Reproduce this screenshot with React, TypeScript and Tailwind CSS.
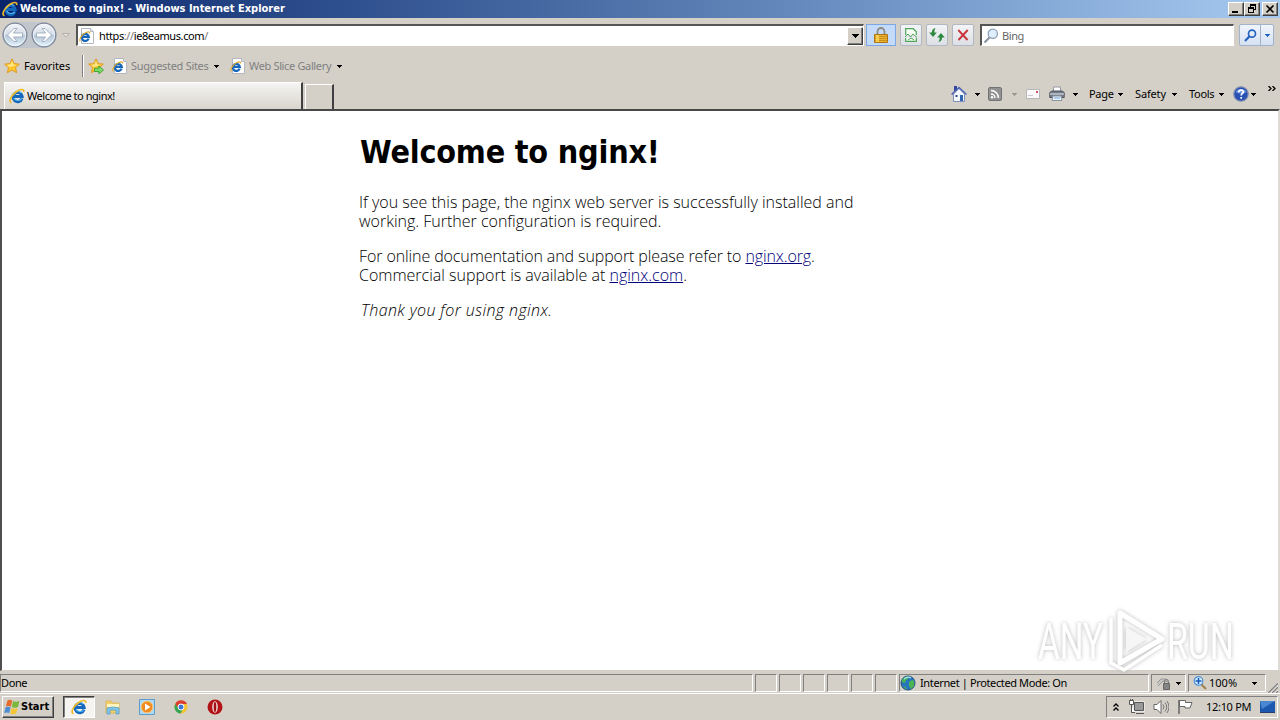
import type { ReactNode } from "react";

const IeIcon = ({ className = "" }: { className?: string }) => (
  <svg viewBox="0 0 16 16" className={`shrink-0 ${className}`}>
    <path d="M13 10.500A4.600 4.600 0 1 1 13.200 8.600H5" fill="none" stroke="#1668bd" strokeWidth="3" />
    <path d="M12.200 4.800A5 5 0 0 0 4 7.500M12.500 10.800A4.600 4.600 0 0 1 4.800 10" fill="none" stroke="#58bdf2" strokeWidth="1.100" />
    <path d="M2.400 14.800C-.6 13.500 2 7.600 7 4 10.600 1.200 15.600 .2 14.600 4" fill="none" stroke="#f0b929" strokeWidth="1.700" />
  </svg>
);

const PageIcon = ({ className = "" }: { className?: string }) => (
  <svg viewBox="0 0 16 16" className={`h-4 w-4 shrink-0 ${className}`}>
    <path d="M2.500 .5h9l3 3v12h-12z" fill="#fff" stroke="#b4b8be" />
    <path d="M11.500 .5v3h3" fill="#e4e8ee" stroke="#b4b8be" />
    <path d="M9.600 10.700A3.500 3.500 0 1 1 9.800 8.900H3.500" fill="none" stroke="#1767bb" strokeWidth="2.300" />
    <path d="M1.200 13.300C-.3 11.500 3 6.500 6.500 4.800 9 3.500 11 3.500 10.500 5.500" fill="none" stroke="#e4ab2b" strokeWidth="1.200" />
  </svg>
);

const Caret = ({ className = "text-black" }: { className?: string }) => (
  <svg viewBox="0 0 5 3" className={`h-[3px] w-[5px] shrink-0 ${className}`} shapeRendering="crispEdges">
    <path d="M0 0h5L2.500 3z" fill="currentColor" />
  </svg>
);

const StarIcon = ({ add = false }: { add?: boolean }) => (
  <svg viewBox="0 0 16 16" className="h-4 w-4 shrink-0">
    <path
      d="M8 .8l2.200 4.800 5.200.5-3.900 3.500 1.200 5.200L8 12.100l-4.700 2.700 1.200-5.200L.6 6.100l5.200-.5z"
      fill="#ffc62b"
      stroke="#dd9624"
      strokeWidth=".9"
    />
    <path d="M8 3l1.400 3.500 3 .4-6.800 2L3 7l3.500-.5z" fill="#ffe98c" />
    {add && <path d="M6.500 10.200h4.300V8l4.700 4-4.700 3.800v-2.300H6.500z" fill="#7bdc68" stroke="#2c9a2f" strokeWidth=".8" />}
  </svg>
);

const NavButton = ({ flip = false }: { flip?: boolean }) => (
  <svg viewBox="0 0 26 26" className={`h-[26px] w-[26px] shrink-0 ${flip ? "-scale-x-100" : ""}`}>
    <defs>
      <linearGradient id="nav" x1="0" y1="0" x2="0" y2="1">
        <stop offset="0" stopColor="#f5f7fa" />
        <stop offset=".48" stopColor="#d3dce7" />
        <stop offset=".52" stopColor="#b4c5d6" />
        <stop offset="1" stopColor="#e5f5fd" />
      </linearGradient>
    </defs>
    <circle cx="13" cy="13" r="11.800" fill="url(#nav)" stroke="#7d8999" strokeWidth="1.300" />
    <circle cx="13" cy="13" r="10.600" fill="none" stroke="#f4f8fc" strokeWidth=".8" />
    <path d="M5.500 13l6.500-6.500h3L11.400 11H20.500v4h-9.100L15 19.500h-3z" fill="#fff" stroke="#9baabc" strokeWidth=".9" />
  </svg>
);

const ToolButton = ({ children, className = "" }: { children: ReactNode; className?: string }) => (
  <div className={`flex h-[22px] w-[22px] items-center justify-center rounded-[2px] border border-[#b1b8c3] bg-linear-to-b from-[#f3f4f6] to-[#dcdfe5] ${className}`}>
    {children}
  </div>
);

const CaptionButton = ({ children }: { children: ReactNode }) => (
  <div className="flex h-[14px] w-4 items-center justify-center border border-t-white border-r-[#404040] border-b-[#404040] border-l-white bg-[#d4d0c8] shadow-[inset_-1px_-1px_0_#808080]">
    {children}
  </div>
);

const TitleBar = () => (
  <div className="flex h-[18px] items-center bg-linear-to-r from-[#0a246a] to-[#a6caf0] pr-[2px] pl-[2px]">
    <IeIcon className="h-4 w-4" />
    <span className="mt-px ml-[2px] flex-1 font-['DejaVu_Sans_Condensed','DejaVu_Sans',sans-serif] text-[11px] font-bold text-white">
      Welcome to nginx! - Windows Internet Explorer
    </span>
    <CaptionButton>
      <svg viewBox="0 0 10 10" className="h-[10px] w-[10px]" shapeRendering="crispEdges">
        <path d="M1 7h6v2H1z" />
      </svg>
    </CaptionButton>
    <CaptionButton>
      <svg viewBox="0 0 10 10" className="h-[10px] w-[10px]" shapeRendering="crispEdges">
        <path d="M3 0h6v6H7V5h1V2H4v1H3zM1 3h6v6H1zM2 5v3h4V5z" fillRule="evenodd" />
      </svg>
    </CaptionButton>
    <div className="w-[2px]" />
    <CaptionButton>
      <svg viewBox="0 0 10 10" className="h-[10px] w-[10px]">
        <path d="M1.500 1.500l7 7M8.500 1.500l-7 7" stroke="#000" strokeWidth="1.600" />
      </svg>
    </CaptionButton>
  </div>
);

const AddressRow = () => (
  <div className="flex h-[34px] items-center pl-[2px]">
    <div className="flex h-[26px] w-[55px] items-center justify-between rounded-full bg-[#c1c5cc]">
      <NavButton />
      <NavButton flip />
    </div>
    <svg viewBox="0 0 8 5" className="ml-[5px] h-[5px] w-2">
      <path d="M.5.5h7L4 4.200z" fill="#e4e1dc" stroke="#aaa69f" strokeWidth=".8" />
    </svg>
    <div className="ml-[6px] flex h-[22px] w-[788px] items-center border-t-2 border-r border-b border-l-2 border-t-[#555] border-r-white border-b-white border-l-[#555] bg-white">
      <PageIcon className="ml-px" />
      <span className="mt-px ml-1 flex-1 text-[11px] tracking-[-0.4px]">
        https<span className="text-[#777]">://</span>ie8eamus.com<span className="text-[#777]">/</span>
      </span>
      <div className="flex h-[18px] w-4 items-center justify-center border border-t-white border-r-[#404040] border-b-[#404040] border-l-white bg-[#d4d0c8] shadow-[inset_-1px_-1px_0_#808080]">
        <svg viewBox="0 0 7 4" className="h-1 w-[7px]" shapeRendering="crispEdges">
          <path d="M0 0h7L3.500 4z" />
        </svg>
      </div>
    </div>
    <div className="ml-[2px] flex h-[22px] w-[30px] items-center justify-center border border-[#7ba7e8] bg-[#c3daf9]">
      <svg viewBox="0 0 14 16" className="-ml-px h-4 w-[14px]">
        <path d="M3.500 8V4.500a3.500 3.500 0 0 1 7 0V8" fill="none" stroke="#8e8a80" strokeWidth="1.800" />
        <path d="M.5 7.500h13v8H.5z" fill="#eeb32c" stroke="#ad7413" />
        <path d="M1 9.500h12M1 11.500h12M1 13.500h12" stroke="#bf851c" strokeWidth=".8" />
        <path d="M2 8h3v7H2z" fill="#ffe064" opacity=".7" />
      </svg>
    </div>
    <ToolButton className="ml-1">
      <svg viewBox="0 0 12 14" className="h-[14px] w-3">
        <path d="M.7 7V.7h7.500l3.100 3V7M.7 10v3.300h10.600V10" fill="#f7fff5" stroke="#4ea45a" strokeWidth="1.200" />
        <path d="M0 9l3-3 2.500 3L8 6l4 3.500M3 12l3-2 3 2" fill="none" stroke="#4ea45a" />
      </svg>
    </ToolButton>
    <ToolButton className="ml-1">
      <svg viewBox="0 0 16 14" className="h-[14px] w-4" fill="#2c8a40">
        <path d="M6.500 0Q3 .8 2.800 4.500H.2L4 9l3.800-4.500H5.300Q5.200 2 6.500 0z" />
        <path d="M9.500 14q3.500-.8 3.700-4.500h2.600L12 5 8.200 9.500h2.500q.1 2.500-1.200 4.500z" />
      </svg>
    </ToolButton>
    <ToolButton className="ml-1">
      <svg viewBox="0 0 12 12" className="h-3 w-3">
        <path d="M1.300 1l9.200 10M10.700 1L1.500 11" stroke="#c9363d" strokeWidth="1.900" />
      </svg>
    </ToolButton>
    <div className="ml-[6px] flex h-[22px] w-[254px] items-center border-t-2 border-r border-b border-l-2 border-t-[#555] border-r-white border-b-white border-l-[#555] bg-white">
      <svg viewBox="0 0 16 16" className="ml-[1px] h-4 w-4">
        <path d="M6.500 9.500L1.500 14.500" stroke="#8c939e" strokeWidth="2.200" />
        <circle cx="9.800" cy="5.800" r="4.600" fill="#e0effb" stroke="#8ca0ba" strokeWidth="1.300" />
      </svg>
      <span className="mt-px ml-[3px] text-[11px] tracking-[-0.4px] text-[#666]">Bing</span>
    </div>
    <div className="ml-[5px] flex h-[22px] w-[35px] rounded-[2px] border border-[#a2b2ca] bg-linear-to-b from-[#f0f5fb] to-[#d5e1f2]">
      <div className="flex w-[21px] items-center justify-center border-r border-[#a2b2ca]">
        <svg viewBox="0 0 13 13" className="h-[13px] w-[13px]" fill="none" stroke="#2463bf">
          <circle cx="8" cy="4.700" r="3.500" strokeWidth="1.700" />
          <path d="M5.300 7.600L1 12" strokeWidth="2.200" />
        </svg>
      </div>
      <div className="flex flex-1 items-center justify-center">
        <Caret className="text-[#2463bf]" />
      </div>
    </div>
  </div>
);

const FavoritesRow = () => (
  <div className="flex h-7 items-center pl-1 text-[11px]">
    <StarIcon />
    <span className="ml-1 w-[58px] tracking-[-0.1px]">Favorites</span>
    <div className="h-[22px] w-[2px] border-r border-l border-r-white border-l-[#808080]" />
    <div className="ml-1 flex">
      <StarIcon add />
    </div>
    <PageIcon className="ml-2" />
    <span className="mt-px ml-[3px] w-[83px] tracking-[-0.3px] text-[#808080]">Suggested Sites</span>
    <Caret />
    <PageIcon className="ml-[11px]" />
    <span className="mt-px ml-[3px] w-[88px] tracking-[-0.35px] text-[#808080]">Web Slice Gallery</span>
    <Caret />
  </div>
);

const CommandBar = () => (
  <div className="flex h-[28px] w-[329px] items-center text-[11px]">
    <svg viewBox="0 0 16 16" className="h-4 w-4">
      <path d="M3 0h3v5H3z" fill="#36479e" />
      <path d="M2.500 8v7.500h11V8L8 2.500z" fill="#f4f7fc" stroke="#8090bb" />
      <path d="M.6 8.500L8 1.500l7.400 7" fill="none" stroke="#4d63b4" strokeWidth="1.600" />
      <path d="M9 9h3v6H9z" fill="#2f65b1" />
      <path d="M4.500 9h2v2h-2z" fill="#38488f" />
    </svg>
    <Caret className="ml-2 text-black" />
    <svg viewBox="0 0 14 14" className="ml-2 h-[14px] w-[14px]">
      <rect x=".5" y=".5" width="13" height="13" rx="1.500" fill="#929292" stroke="#747474" />
      <path d="M3 7a4 4 0 0 1 4 4M3 3.500A7.500 7.500 0 0 1 10.500 11" fill="none" stroke="#fff" strokeWidth="1.500" />
      <circle cx="4" cy="10.200" r="1.200" fill="#fff" />
    </svg>
    <Caret className="ml-[10px] text-[#9b9790]" />
    <svg viewBox="0 0 14 10" className="ml-[9px] h-[10px] w-[14px]">
      <path d="M.5.5h13v9H.5z" fill="#fafafa" stroke="#b5b7bd" />
      <path d="M10 2h2v2h-2z" fill="#cf5260" />
      <path d="M2 6.500h5" stroke="#c8cad0" />
    </svg>
    <svg viewBox="0 0 16 16" className="ml-[9px] h-4 w-4">
      <path d="M4.500 1h7v5h-7z" fill="#fff" stroke="#9498a2" />
      <path d="M.8 6.500L3 5h10l2.200 1.500v5H.8z" fill="#767d89" stroke="#4d535e" />
      <path d="M1 8h14" stroke="#c1c8d1" strokeWidth="1.500" />
      <path d="M4 10h8l1 4.500H3z" fill="#eef5fd" stroke="#8b94a2" />
      <path d="M5 12h6" stroke="#65a1da" />
    </svg>
    <Caret className="ml-2 text-black" />
    <span className="ml-[11px] w-[29px] tracking-[-0.3px]">Page</span>
    <Caret />
    <span className="ml-3 w-[37px] tracking-[-0.15px]">Safety</span>
    <Caret />
    <span className="ml-3 w-[30px] tracking-[-0.3px]">Tools</span>
    <Caret />
    <svg viewBox="0 0 16 16" className="ml-[9px] h-4 w-4">
      <circle cx="8" cy="8" r="7.200" fill="#2950b4" stroke="#7d8bad" strokeWidth="1.200" />
      <path d="M2.500 6a6 5 0 0 1 11 0q-5.500 3-11 0" fill="#7296df" />
      <path d="M5.800 6.200c0-3 4.500-2.700 4.500-.3C10.300 7.500 8.200 7.500 8.200 9.500M8.200 11v1.700" fill="none" stroke="#fff" strokeWidth="1.700" />
    </svg>
    <Caret className="ml-[2px] text-black" />
    <svg viewBox="0 0 8 5" className="mb-3 ml-3 h-[5px] w-2 shrink-0" fill="none" stroke="#000" strokeWidth="1.300">
      <path d="M.5 0L3 2.500.5 5M4.500 0L7 2.500 4.500 5" />
    </svg>
  </div>
);

const TabRow = () => (
  <div className="flex h-[29px] items-start justify-between pl-1">
    <div className="flex items-end">
      <div className="mt-[2px] flex h-[27px] w-[299px] items-center border-t border-r-2 border-l border-t-white border-r-[#404040] border-l-white bg-linear-to-b from-[#f5f4f2] to-[#d9d5ce] pl-1">
        <IeIcon className="h-4 w-4" />
        <span className="ml-[2px] text-[11px] tracking-[-0.47px]">Welcome to nginx!</span>
      </div>
      <div className="ml-[2px] h-[25px] w-[29px] border-t border-r-2 border-l border-t-white border-r-[#404040] border-l-white" />
    </div>
    <CommandBar />
  </div>
);

const Watermark = () => (
  <svg viewBox="0 0 200 64" className="absolute right-[40px] -bottom-[3px] h-16 w-[200px] overflow-visible opacity-80 drop-shadow-[0_0_2px_#aaa]">
    <g fill="#fff" className="font-['Roboto',sans-serif] text-[50px]">
      <text x="0" y="50" textLength="65" lengthAdjust="spacingAndGlyphs">ANY</text>
      <text x="129" y="50" textLength="67" lengthAdjust="spacingAndGlyphs">RUN</text>
    </g>
    <path d="M82 4v50l42-24z" fill="none" stroke="#fff" strokeWidth="5" strokeLinejoin="round" />
    <path d="M73 9v45l13 7 38-25" fill="none" stroke="#fff" strokeWidth="3.500" />
    <path d="M88 18v25l21-13z" fill="#f5f5f5" />
  </svg>
);

const PageView = () => (
  <div className="relative h-[562px] border-t-2 border-r-2 border-b border-l-2 border-t-[#484848] border-r-[#dedbd5] border-b-[#d4d0c8] border-l-[#505050] bg-white">
    <div className="ml-[357px] w-[560px] pt-[22px] font-['Open_Sans','Noto_Sans',sans-serif] text-base leading-[19px] font-light whitespace-nowrap">
      <h1 className="mb-[21px] pl-px font-['DejaVu_Sans_Condensed','DejaVu_Sans',sans-serif] text-[32px] leading-[39px] font-bold tracking-[-0.2px]">
        Welcome to nginx!
      </h1>
      <p className="mb-4">
        If you see this page, the nginx web server is successfully installed and
        <br />
        working. Further configuration is required.
      </p>
      <p className="mb-4">
        <span className="tracking-[-0.1px]">
          For online documentation and support please refer to <a className="text-[#00007b] underline">nginx.org</a>.
        </span>
        <br />
        Commercial support is available at <a className="text-[#00007b] underline">nginx.com</a>.
      </p>
      <p className="pl-[2px] tracking-[0.4px] italic">Thank you for using nginx.</p>
    </div>
    <Watermark />
  </div>
);

const cell = "flex h-[18px] items-center border border-t-[#808080] border-r-white border-b-white border-l-[#808080]";

const StatusBar = () => (
  <div className="flex h-[23px] gap-[2px] border-b border-white pt-[3px] text-[11px]">
    <div className={`${cell} w-[753px] tracking-[-0.4px]`}>Done</div>
    {[0, 1, 2, 3, 4, 5].map((i) => (
      <div key={i} className={`${cell} w-[22px]`} />
    ))}
    <div className={`${cell} w-[250px]`}>
      <svg viewBox="0 0 16 16" className="h-4 w-4">
        <circle cx="8" cy="8" r="7" fill="#2776bd" stroke="#285480" />
        <path d="M2 5q4-5 7-3-1 3-3 3l-1 3-3-1M9 7q3-3 5-1v5l-3 3-2-3M3 11l3 1 1 3" fill="#48b653" />
        <path d="M4 4q4-3 7-1" fill="none" stroke="#a8e6f5" strokeWidth="1.200" />
      </svg>
      <span className="ml-1 tracking-[-0.37px]">Internet | Protected Mode: On</span>
    </div>
    <div className={`${cell} w-[35px] pl-1`}>
      <svg viewBox="0 0 16 16" className="h-4 w-4">
        <path d="M1 8l4-4h5l2 3-5-1-5 5" fill="#c4c4c4" stroke="#9b9b9b" />
        <path d="M7.500 8.500h6v6h-6z" fill="#858585" stroke="#666" />
        <path d="M8.500 8V6.500a2 2 0 0 1 4 0V8" fill="none" stroke="#777" />
      </svg>
      <Caret className="ml-1 text-black" />
    </div>
    <div className={`${cell} w-[78px] pl-1`}>
      <svg viewBox="0 0 14 14" className="h-[14px] w-[14px]">
        <path d="M8 8l5 5" stroke="#a38250" strokeWidth="2.200" />
        <circle cx="5.500" cy="5" r="4.300" fill="#d9efff" stroke="#4e91d7" strokeWidth="1.200" />
        <path d="M5.500 2v6M2.500 5h6" stroke="#175bbd" strokeWidth="1.600" />
      </svg>
      <span className="ml-[2px] w-[43px]">100%</span>
      <Caret />
    </div>
    <svg viewBox="0 0 12 12" className="-ml-[2px] mt-[7px] h-3 w-3 shrink-0">
      <path d="M1 12L12 1M5 12l7-7M9 12l3-3" stroke="#fff" />
      <path d="M2 12L12 2M6 12l6-6M10 12l2-2" stroke="#808080" strokeWidth="1.300" />
    </svg>
  </div>
);

const Taskbar = () => (
  <div className="flex h-[26px] items-start justify-between pt-[2px] pr-[2px] pl-[2px]">
    <div className="flex items-center">
      <div className="flex h-[22px] w-[52px] items-center border border-t-white border-r-[#404040] border-b-[#404040] border-l-white pl-px shadow-[inset_-1px_-1px_0_#808080]">
        <svg viewBox="0 0 16 16" className="h-4 w-4 shrink-0">
          <path d="M3.500 1.500Q6 .2 8.200 1.500L6.900 7.500Q4.500 6.500 1.800 7.500z" fill="#e56a2d" />
          <path d="M9 2q3 1.500 6.500 0L13.900 8q-3 1.500-6.100 0z" fill="#79b83c" />
          <path d="M1.600 8.300q2.500-1.300 5 0L5.200 14Q3 13 .2 14z" fill="#4b8ed5" />
          <path d="M7.500 9q3 1.500 6.100 0L12.200 14.500q-3 1.500-6.100 0z" fill="#f5c539" />
        </svg>
        <span className="mt-px ml-[1px] font-['DejaVu_Sans_Condensed','DejaVu_Sans',sans-serif] text-[11px] font-bold">Start</span>
      </div>
      <div className="ml-[9px] flex h-[22px] w-8 items-center justify-center border border-t-[#404040] border-r-white border-b-white border-l-[#404040] bg-[#f6f4f1] shadow-[inset_1px_1px_0_#808080]">
        <IeIcon className="h-4 w-4" />
      </div>
      <svg viewBox="0 0 16 16" className="ml-[10px] h-4 w-4">
        <path d="M1 2h5l1 2h7v10H1z" fill="#f0cf68" stroke="#dcb95e" />
        <path d="M2 5h12v3H2z" fill="#fff5bd" />
        <path d="M2 15V9q6-2 12 0v6h-3v-4H5v4z" fill="#84c7ec" stroke="#4a9acb" strokeWidth=".7" />
      </svg>
      <svg viewBox="0 0 16 16" className="ml-[18px] h-4 w-4">
        <path d="M.5.5h15v15H.5z" fill="#b2d8f0" stroke="#5b9dcc" />
        <circle cx="8" cy="8" r="5.800" fill="#f08b20" stroke="#fbc36e" />
        <path d="M6 4.500v7L11.500 8z" fill="#fff" />
      </svg>
      <svg viewBox="0 0 16 16" className="ml-[18px] h-4 w-4">
        <circle cx="8" cy="8" r="6.500" fill="#f4c430" />
        <path d="M2.200 5A6.500 6.500 0 0 1 14 5H8L5 9.500z" fill="#dc3e30" />
        <path d="M2.200 5A6.500 6.500 0 0 0 7.500 14.500L10 10 5.500 9.500z" fill="#35a353" />
        <circle cx="8" cy="8" r="3" fill="#3c78d8" stroke="#fff" />
      </svg>
      <svg viewBox="0 0 16 16" className="ml-[18px] h-4 w-4">
        <circle cx="8" cy="8" r="7.500" fill="#b31217" />
        <ellipse cx="8" cy="8" rx="2.800" ry="5.800" fill="#f5dddd" />
        <ellipse cx="8" cy="8" rx="1.300" ry="5" fill="#a11015" />
      </svg>
    </div>
    <div className="flex h-[22px] w-[172px] items-center border border-t-[#808080] border-r-white border-b-white border-l-[#808080] pl-[6px] text-[11px]">
      <svg viewBox="0 0 6 8" className="h-2 w-[6px]" fill="none" stroke="#000" strokeWidth="1.300">
        <path d="M.5 3.500L3 1l2.500 2.500M.5 7.500L3 5l2.500 2.500" />
      </svg>
      <svg viewBox="0 0 16 16" className="ml-[10px] h-4 w-4">
        <path d="M5.500 3.500h9v8h-9z" fill="#8d8d8d" stroke="#fff" strokeWidth="2" />
        <path d="M5.500 3.500h9v8h-9z" fill="#9a9a9a" stroke="#555" />
        <path d="M.5 1.500h4v4h-4zM1.500 0v2M3.500 0v2M2.500 6v7.500H6M7 14.500h8" fill="#fff" stroke="#555" />
      </svg>
      <svg viewBox="0 0 16 16" className="ml-2 h-4 w-4">
        <path d="M1 5.500h3l4-4v13l-4-4H1z" fill="#fff" stroke="#666" />
        <path d="M10 5.500q2 2.500 0 5M12 3.500q3.500 4.500 0 9M14 2q4 6 0 12" fill="none" stroke="#777" />
      </svg>
      <svg viewBox="0 0 16 16" className="ml-2 h-4 w-4">
        <path d="M2.500 1.500h6v2h6.500L13 9H8V7.500H2.500z" fill="#fff" stroke="#666" />
        <path d="M2 1v14" stroke="#666" strokeWidth="1.500" />
      </svg>
      <span className="ml-[13px] w-[54px] tracking-[-0.3px]">12:10 PM</span>
      <svg viewBox="0 0 16 12" className="h-3 w-4">
        <path d="M0 0h15v11H0z" fill="#1c58ad" />
        <path d="M0 0h15L2 8z" fill="#4a87d2" />
        <path d="M0 11.500h15" stroke="#243f6b" />
      </svg>
    </div>
  </div>
);

export default function App() {
  return (
    <div className="h-[720px] w-[1280px] overflow-hidden bg-[#d4d0c8] font-['Noto_Sans',sans-serif] whitespace-nowrap text-black">
      <TitleBar />
      <AddressRow />
      <FavoritesRow />
      <TabRow />
      <PageView />
      <StatusBar />
      <Taskbar />
    </div>
  );
}
